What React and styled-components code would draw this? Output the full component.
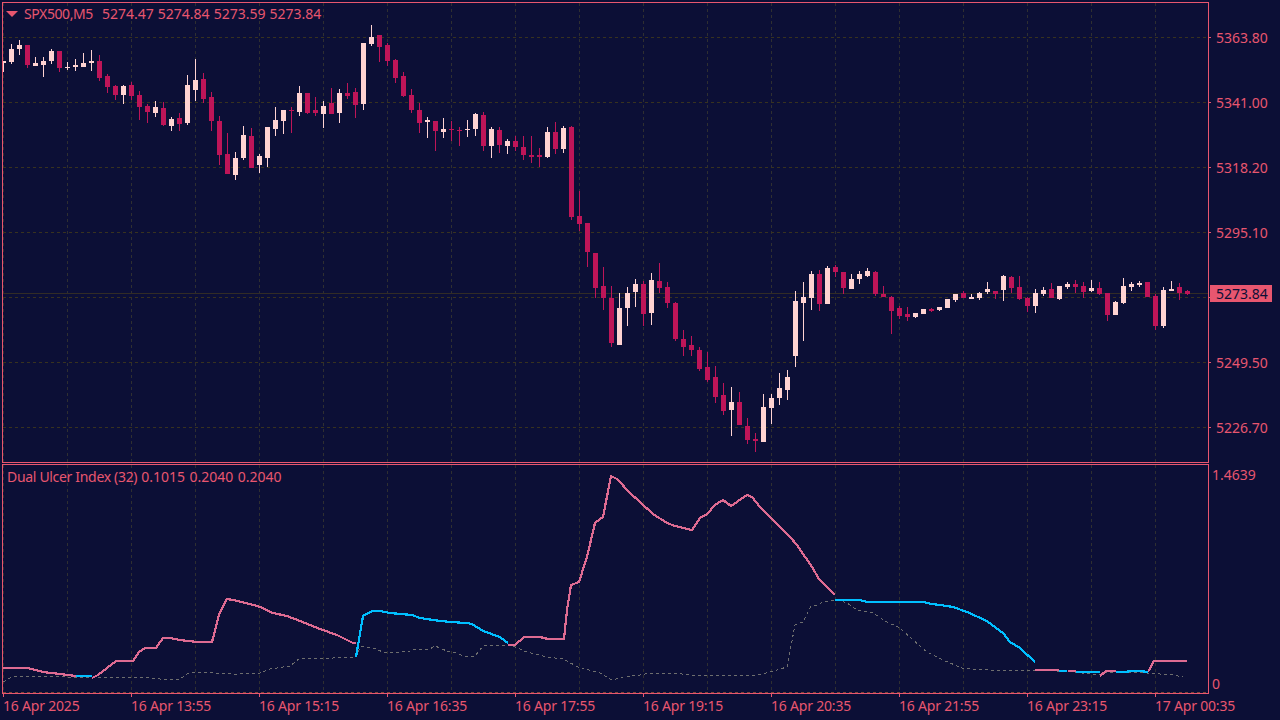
import React from "react";
import styled, { createGlobalStyle } from "styled-components";

const BG = "#0c0f36";
const ACCENT = "#e8566f";
const BULL = "#ffd3d2";
const BEAR = "#be1558";

/* [centre x, wick top, body top, body bottom, wick bottom, bull?] — page pixels */
const CANDLES = [
  [3,61,61,63,72,1],[11,44,49,62,64,1],[19,40,45,49,55,1],[27,45,45,65,68,0],[35,57,63,66,66,1],[43,57,61,65,77,1],
  [51,49,51,61,64,1],[59,51,51,68,72,0],[67,62,67,68,70,1],[75,59,65,67,71,1],[83,53,63,67,67,1],[91,50,61,63,71,1],
  [99,55,61,78,81,0],[107,74,76,87,93,0],[115,85,86,95,100,0],[123,85,86,95,104,1],[131,82,85,96,100,0],[139,91,95,107,120,0],
  [147,104,106,112,123,0],[155,101,107,113,117,1],[163,102,108,125,126,0],[171,117,119,126,131,1],[179,113,118,124,131,0],
  [187,75,85,123,125,1],[195,59,80,90,101,1],[203,73,79,99,103,0],[211,92,97,121,131,0],[219,116,121,155,165,0],
  [227,133,154,174,174,0],[235,152,158,175,180,1],[243,126,135,158,160,1],[251,128,136,168,168,0],[259,154,156,165,173,1],
  [267,127,127,158,167,1],[275,107,120,129,136,1],[283,110,110,121,134,1],[291,107,110,111,133,0],[299,86,93,112,116,1],
  [307,93,93,113,114,0],[315,97,110,113,116,0],[323,101,106,114,128,1],[331,88,103,114,114,0],[339,89,93,113,123,1],
  [347,83,93,96,99,0],[355,88,92,105,118,0],[363,43,43,104,110,1],[371,25,37,44,46,1],[379,35,35,47,62,0],[387,43,45,61,66,0],
  [395,59,60,78,83,0],[403,72,76,96,97,0],[411,89,95,110,113,0],[419,103,110,123,133,0],[427,117,120,122,138,1],
  [435,121,121,131,151,0],[443,118,129,132,138,1],[451,121,129,130,141,0],[459,127,130,131,146,0],[467,120,129,130,137,1],
  [475,113,114,129,136,1],[483,112,115,146,151,0],[491,127,129,146,158,1],[499,127,130,145,153,0],[507,139,141,146,154,1],
  [515,136,141,147,151,0],[523,136,147,155,160,0],[531,136,155,157,163,0],[539,148,155,157,167,0],[547,127,132,157,158,1],
  [555,122,132,149,154,0],[563,126,128,149,153,1],[571,126,127,217,220,0],[579,191,216,224,231,0],[587,223,223,252,267,0],
  [595,253,253,288,298,0],[603,267,286,298,310,0],[611,286,298,343,347,0],[619,293,308,345,345,1],[627,287,293,308,326,1],
  [635,279,284,292,307,1],[643,281,284,314,326,0],[651,273,280,313,325,1],[659,263,281,288,293,0],[667,282,287,303,308,0],
  [675,302,303,339,341,0],[683,330,339,347,356,0],[691,336,345,350,356,0],[699,347,350,369,371,0],[707,352,367,380,382,0],
  [715,366,377,397,403,0],[723,383,395,411,415,0],[731,387,402,410,436,1],[739,392,402,425,425,0],[747,418,426,440,444,0],
  [755,433,439,441,452,0],[763,394,407,442,442,1],[771,394,398,408,424,1],[779,373,388,398,405,1],[787,370,377,390,400,1],
  [795,291,301,356,367,1],[803,282,297,303,341,1],[811,271,274,298,310,1],[819,270,274,304,311,0],[827,266,268,304,304,1],
  [835,265,267,272,277,0],[843,272,272,288,294,0],[851,274,279,289,289,1],[859,271,274,279,284,1],[867,268,271,276,277,1],
  [875,271,272,294,296,0],[883,286,294,297,297,0],[891,296,297,311,334,0],[899,306,308,316,319,0],[907,307,314,317,321,0],
  [915,313,313,317,318,1],[923,309,309,314,314,1],[931,308,309,311,312,0],[939,307,307,310,311,1],[947,299,299,308,308,1],
  [955,294,294,300,302,1],[963,291,293,298,298,0],[971,294,297,299,299,1],[979,292,293,298,300,1],[987,282,289,292,294,1],
  [995,291,291,294,299,0],[1003,275,276,290,301,1],[1011,276,277,288,293,0],[1019,276,287,299,300,0],[1027,297,298,306,312,0],
  [1035,289,293,306,313,1],[1043,287,290,294,296,1],[1051,283,289,298,298,0],[1059,286,286,299,300,1],[1067,282,284,287,289,1],
  [1075,280,284,287,293,0],[1083,282,286,292,298,0],[1091,280,288,291,292,1],[1099,282,288,294,295,0],[1107,293,293,315,321,0],
  [1115,301,302,315,315,1],[1123,278,286,303,304,1],[1131,282,284,287,291,1],[1139,281,283,285,287,1],[1147,282,282,297,297,0],
  [1155,294,296,326,330,0],[1163,287,290,326,328,1],[1171,281,289,291,291,1],[1179,283,287,293,300,0],[1187,290,291,294,295,0],
];

const PINK = [
  "3,668 27,668 36,670 43,672 60,674 68,675 76,676",
  "92,678 98,675 107,668 116,661 133,661 139,652 145,648 156,648 163,638 170,638 180,640 197,642 212,642 219,615 227,599 233,600 250,604 260,607 273,613 287,616 300,621 320,629 337,635 353,643 356,643",
  "508,645 515,645 524,637 540,637 548,639 564,639 567,610 571,585 579,582 587,557 595,523 603,517 611,476 617,479 630,493 640,502 653,514 667,523 675,526 692,530 700,518 707,514 715,505 723,500 731,506 747,495 752,497 760,507 790,537 797,545 812,567 819,579 835,595",
  "1035,670 1059,670",
  "1068,671 1076,671",
  "1100,676 1106,671 1116,671",
  "1148,672 1154,661 1187,661",
];

const BLUE = [
  "76,676 92,676",
  "356,657 363,616 372,611 380,611 390,613 412,615 420,618 433,620 450,622 467,623 472,624 483,631 500,637 508,643",
  "835,600 859,600 868,602 923,602 932,604 940,605 953,607 967,612 987,621 1003,633 1010,642 1020,648 1035,662",
  "1059,671 1067,671",
  "1076,672 1100,672",
  "1116,672 1124,672 1132,671 1140,671 1148,672",
];

const SIGNAL =
  "3,682 10,678 18,676 67,677 93,677 150,678 160,679 180,679 187,674 197,672 233,674 240,674 260,673 270,669 290,666 300,658 333,658 337,657 356,657 361,646 373,648 383,652 395,653 410,651 417,649 430,649 435,646 447,651 457,653 463,656 475,656 483,646 510,645 527,652 547,657 563,659 578,667 600,673 612,680 623,677 640,675 650,673 673,673 690,675 757,675 770,672 787,667 795,625 803,622 811,606 818,605 823,602 837,600 847,603 857,610 873,613 887,622 900,628 913,640 927,652 943,660 962,668 970,669 1007,671 1037,670 1073,672 1100,675 1107,672 1147,673 1173,675 1183,677";

/* the fifth level (y = 297) sits under the live price tag: only its tick shows */
const PRICE_LABELS = ["5363.80", "5341.00", "5318.20", "5295.10", "", "5249.50", "5226.70"];
const PRICE_GRID = [37, 102, 167, 232, 297, 362, 427];
const TIME_LABELS = ["16 Apr 2025", "16 Apr 13:55", "16 Apr 15:15", "16 Apr 16:35", "16 Apr 17:55", "16 Apr 19:15", "16 Apr 20:35", "16 Apr 21:55", "16 Apr 23:15", "17 Apr 00:35"];
const V_GRID = Array.from({ length: 19 }, (_, i) => 3 + 64 * i);

const Global = createGlobalStyle`
  html, body { margin: 0; padding: 0; background: ${BG}; }
  body { font-family: "Noto Sans", "Liberation Sans", sans-serif; }
`;

const Page = styled.div`
  width: 1280px;
  height: 720px;
  overflow: hidden;
  box-sizing: border-box;
  padding: 2px 0 0 2px;
  background: ${BG};
  color: ${ACCENT};
  font-size: 14px;
  line-height: 16px;
  display: flex;
  flex-direction: column;
`;

const Row = styled.div`
  display: flex;
  height: ${(p) => p.$height}px;
  margin-top: ${(p) => p.$gap || 0}px;
  flex: none;
`;

const Pane = styled.div`
  position: relative;
  box-sizing: border-box;
  width: 1207px;
  height: 100%;
  border: 1px solid ${ACCENT};
  overflow: hidden;
`;

const Drawing = styled.svg`
  display: block;
  width: 1205px;
  height: 100%;
  shape-rendering: crispEdges;
`;

const Header = styled.div`
  position: absolute;
  top: 3px;
  left: 3px;
  display: flex;
  align-items: center;
  white-space: pre;
`;

const Legend = styled.div`
  position: absolute;
  top: 4px;
  left: 4px;
  display: flex;
  white-space: pre;
`;

const LegendName = styled.span`
  letter-spacing: -0.32px;
  margin-right: 4px;
`;

const LegendValues = styled.span`
  word-spacing: 0.8px;
`;

const Triangle = styled.span`
  width: 0;
  height: 0;
  border-left: 6px solid transparent;
  border-right: 6px solid transparent;
  border-top: 6px solid ${ACCENT};
  margin-right: 6px;
`;

const Symbol = styled.span`
  margin-right: 9px;
  letter-spacing: -0.4px;
`;

const Quotes = styled.span`
  word-spacing: 0.4px;
`;

const PriceAxis = styled.div`
  position: relative;
  width: 71px;
  padding-top: 3px;
  box-sizing: border-box;
`;

const PriceLabel = styled.div`
  height: 65px;
  display: flex;
  align-items: center;
  gap: 5px;
  &::before {
    content: "";
    width: 2px;
    height: 1px;
    background: ${ACCENT};
  }
`;

const PriceTag = styled.div`
  position: absolute;
  top: 283px;
  left: 1px;
  width: 62px;
  height: 17px;
  background: ${ACCENT};
  color: ${BG};
  box-sizing: border-box;
  padding-left: 6px;
  line-height: 17px;
`;

const IndicatorAxis = styled.div`
  width: 71px;
  box-sizing: border-box;
  padding: 3px 0 2px 3px;
  display: flex;
  flex-direction: column;
  justify-content: space-between;
`;

const TimeAxis = styled.div`
  display: flex;
  padding-left: 1px;
  flex: none;
`;

const TimeCell = styled.div`
  width: 128px;
  flex: none;
  white-space: nowrap;
  letter-spacing: -0.2px;
  &::before {
    content: "";
    display: block;
    width: 1px;
    height: 3px;
    margin-bottom: 1px;
    background: ${ACCENT};
  }
`;

const Candle = ({ c: [x, wt, bt, bb, wb, bull] }) => {
  const fill = bull ? BULL : BEAR;
  return (
    <g fill={fill}>
      <rect x={x} y={wt} width={1} height={wb - wt} />
      <rect x={x - 2} y={bt} width={5} height={Math.max(bb - bt, 1)} />
    </g>
  );
};

const VerticalGrid = ({ from, to }) =>
  V_GRID.map((x) => (
    <line key={x} x1={x + 0.5} x2={x + 0.5} y1={from} y2={to} stroke="#2f2f31" strokeDasharray="3 3" />
  ));

const PriceChart = () => (
  <Drawing viewBox="3 3 1205 459" preserveAspectRatio="none">
    <VerticalGrid from={3} to={462} />
    {PRICE_GRID.map((y) => (
      <line key={y} x1={3} x2={1208} y1={y + 0.5} y2={y + 0.5} stroke="#38321f" strokeDasharray="3 3" />
    ))}
    <line x1={3} x2={1208} y1={293.5} y2={293.5} stroke="#322c26" />
    {CANDLES.map((c) => (
      <Candle key={c[0]} c={c} />
    ))}
  </Drawing>
);

const IndicatorChart = () => (
  <Drawing viewBox="3 465 1205 228" preserveAspectRatio="none">
    <VerticalGrid from={465} to={693} />
    <line x1={3} x2={1208} y1={692.5} y2={692.5} stroke="#7a4438" strokeDasharray="3 3" />
    <polyline points={SIGNAL} fill="none" stroke="#6e6e6e" strokeWidth={1} strokeDasharray="3 3" />
    {PINK.map((p) => (
      <polyline key={p} points={p} fill="none" stroke="#de6b92" strokeWidth={2.2} />
    ))}
    {BLUE.map((p) => (
      <polyline key={p} points={p} fill="none" stroke="#00bfff" strokeWidth={2.2} />
    ))}
  </Drawing>
);

export default function App() {
  return (
    <Page>
      <Global />
      <Row $height={461}>
        <Pane>
          <PriceChart />
          <Header>
            <Triangle />
            <Symbol>SPX500,M5</Symbol>
            <Quotes>5274.47 5274.84 5273.59 5273.84</Quotes>
          </Header>
        </Pane>
        <PriceAxis>
          {PRICE_LABELS.map((l, i) => (
            <PriceLabel key={i}>{l}</PriceLabel>
          ))}
          <PriceTag>5273.84</PriceTag>
        </PriceAxis>
      </Row>
      <Row $height={230} $gap={1}>
        <Pane>
          <IndicatorChart />
          <Legend>
            <LegendName>Dual Ulcer Index (32)</LegendName>
            <LegendValues>0.1015 0.2040 0.2040</LegendValues>
          </Legend>
        </Pane>
        <IndicatorAxis>
          <span>1.4639</span>
          <span>0</span>
        </IndicatorAxis>
      </Row>
      <TimeAxis>
        {TIME_LABELS.map((t) => (
          <TimeCell key={t}>{t}</TimeCell>
        ))}
      </TimeAxis>
    </Page>
  );
}
